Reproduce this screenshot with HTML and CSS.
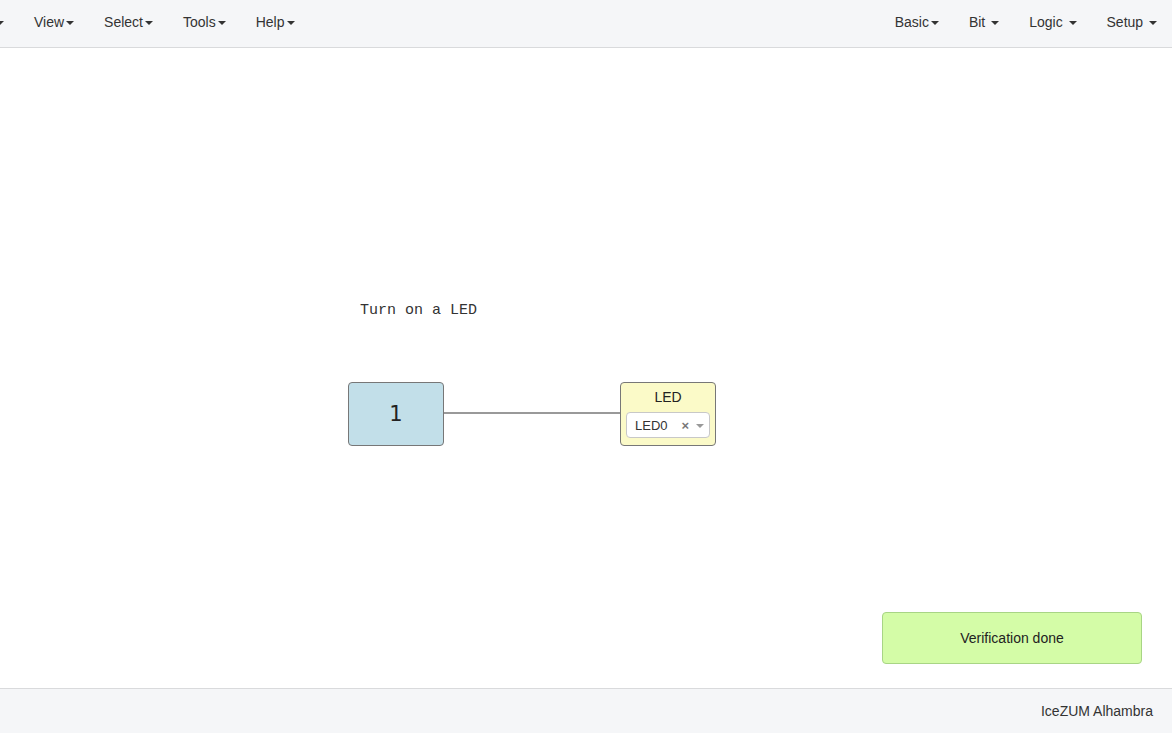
FILE: index.html
```html
<!DOCTYPE html>
<html>
<head>
<meta charset="utf-8">
<link rel="stylesheet" href="styles.css">
</head>
<body>
<div class="app">
  <nav class="navbar">
    <ul class="menu menu-left">
      <li class="item cut"><span class="caret"></span></li>
      <li class="item">View<span class="caret"></span></li>
      <li class="item">Select<span class="caret"></span></li>
      <li class="item">Tools<span class="caret"></span></li>
      <li class="item">Help<span class="caret"></span></li>
    </ul>
    <ul class="menu menu-right">
      <li class="item">Basic<span class="caret"></span></li>
      <li class="item">Bit <span class="caret"></span></li>
      <li class="item">Logic <span class="caret"></span></li>
      <li class="item">Setup <span class="caret"></span></li>
    </ul>
  </nav>
  <main class="canvas">
    <div class="comment">Turn on a LED</div>
    <div class="block const">1</div>
    <svg class="wire" width="180" height="4" viewBox="0 0 180 4"><line x1="0" y1="2" x2="180" y2="2" stroke="#777" stroke-width="1.6"/></svg>
    <div class="block output">
      <div class="block-title">LED</div>
      <div class="select">
        <span class="sel-val">LED0</span>
        <span class="sel-clear">×</span>
        <span class="sel-arrow"></span>
      </div>
    </div>
    <div class="toast">Verification done</div>
  </main>
  <footer class="footer">
    <span class="board">IceZUM Alhambra</span>
  </footer>
</div>
</body>
</html>
```
FILE: styles.css
```css
* { box-sizing: border-box; }
html, body { margin: 0; padding: 0; }
body {
  font-family: "Liberation Sans", Arial, sans-serif;
  font-size: 14px;
  color: #333;
  background: #fff;
  overflow: hidden;
}
.app {
  width: 1172px;
  height: 733px;
  display: flex;
  flex-direction: column;
}
.navbar {
  height: 48px;
  flex: none;
  background: #f5f6f8;
  border-bottom: 1px solid #d9dadc;
  display: flex;
  justify-content: space-between;
}
.menu {
  list-style: none;
  margin: 0;
  padding: 0;
  display: flex;
}
.menu-left { margin-left: -21px; }
.menu-right { margin-right: 0; }
.item {
  padding: 12px 15px 15px;
  line-height: 20px;
  color: #333;
  white-space: nowrap;
}
.caret {
  display: inline-block;
  width: 0;
  height: 0;
  margin-left: 2px;
  vertical-align: middle;
  border-top: 4px solid #333;
  border-left: 4px solid transparent;
  border-right: 4px solid transparent;
}
.canvas {
  flex: 1;
  position: relative;
  background: #fff;
}
.comment {
  position: absolute;
  left: 360px;
  top: 253px;
  font-family: "Liberation Mono", "Courier New", monospace;
  font-size: 15px;
  line-height: 20px;
  color: #333;
}
.block {
  position: absolute;
  width: 96px;
  height: 64px;
  border: 1px solid #777;
  border-radius: 4px;
}
.const {
  left: 348px;
  top: 334px;
  background: #c2dfe9;
  display: flex;
  align-items: center;
  justify-content: center;
  font-family: "DejaVu Sans", sans-serif;
  font-size: 21px;
  color: #222;
}
.wire {
  position: absolute;
  left: 443px;
  top: 363px;
  width: 178px;
}
.output {
  left: 620px;
  top: 334px;
  background: #fbfac8;
  display: flex;
  flex-direction: column;
  align-items: center;
  padding-top: 6px;
}
.block-title {
  font-size: 14px;
  line-height: 17px;
  color: #222;
}
.select {
  margin-top: 6px;
  width: 84px;
  height: 26px;
  background: #fff;
  border: 1px solid #c8c8c8;
  border-radius: 4px;
  display: flex;
  align-items: center;
  padding-left: 8px;
  font-size: 13px;
  color: #333;
}
.sel-val { flex: 1; }
.sel-clear {
  font-size: 13px;
  font-weight: bold;
  color: #777;
  margin-right: 7px;
}
.sel-arrow {
  width: 0;
  height: 0;
  border-top: 4px solid #999;
  border-left: 4px solid transparent;
  border-right: 4px solid transparent;
  margin-right: 5px;
  margin-top: 2px;
}
.toast {
  position: absolute;
  left: 882px;
  top: 564px;
  width: 260px;
  height: 52px;
  background: #d4fca7;
  border: 1px solid #a8d585;
  border-radius: 4px;
  display: flex;
  align-items: center;
  justify-content: center;
  font-size: 14px;
  color: #222;
}
.footer {
  height: 45px;
  flex: none;
  background: #f5f6f8;
  border-top: 1px solid #d9dadc;
  display: flex;
  align-items: center;
  justify-content: flex-end;
  padding-right: 19px;
}
.board {
  font-size: 14px;
  color: #333;
}
```
